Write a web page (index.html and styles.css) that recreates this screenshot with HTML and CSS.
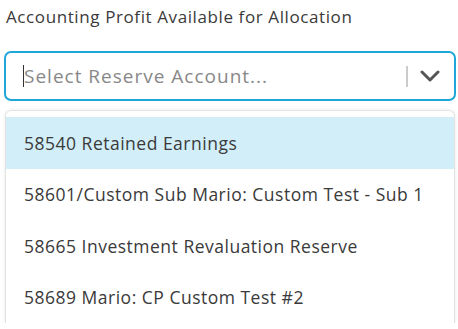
FILE: index.html
```html
<!DOCTYPE html>
<html lang="en">
<head>
  <meta charset="UTF-8">
  <meta name="viewport" content="width=device-width, initial-scale=1">
  <title>Reserve Account</title>
  <link rel="stylesheet" href="styles.css">
</head>
<body>
  <div class="field">
    <label class="field-label">Accounting Profit Available for Allocation</label>
    <div class="select-box">
      <div class="select-value">
        <span class="caret"></span>
        <span class="placeholder">Select Reserve Account...</span>
      </div>
      <span class="separator"></span>
      <span class="chevron">
        <svg width="20" height="12" viewBox="0 0 20 12">
          <path d="M2 2 L10 10 L18 2" fill="none" stroke="#555" stroke-width="3" stroke-linecap="round" stroke-linejoin="round"/>
        </svg>
      </span>
    </div>
    <div class="menu">
      <div class="option active">58540 Retained Earnings</div>
      <div class="option">58601/Custom Sub Mario: Custom Test - Sub 1</div>
      <div class="option">58665 Investment Revaluation Reserve</div>
      <div class="option">58689 Mario: CP Custom Test #2</div>
    </div>
  </div>
</body>
</html>
```

FILE: styles.css
```css
body {
  margin: 0;
  padding: 0 2px 0 4px;
  font-family: "Open Sans", Lato, sans-serif;
  color: #333;
  background: #fff;
}
.field {
  display: flex;
  flex-direction: column;
}
.field-label {
  font-size: 17px;
  line-height: 20px;
  padding: 7px 0 0 2px;
  color: #3a3a3a;
  letter-spacing: 0.6px;
}
.select-box {
  margin-top: 24px;
  height: 46px;
  border: 2px solid #1ea7d8;
  border-radius: 7px;
  display: flex;
  align-items: center;
}
.select-value {
  flex: 1;
  display: flex;
  align-items: center;
  padding-left: 17px;
}
.caret {
  width: 1px;
  height: 22px;
  background: #333;
}
.placeholder {
  font-size: 19px;
  color: #888;
  letter-spacing: 1px;
}
.separator {
  width: 2px;
  height: 21px;
  background: #ccc;
}
.chevron {
  display: flex;
  padding: 0 14px 0 12px;
}
.menu {
  margin: 9px 1px 0 1px;
  padding-top: 6px;
  border: 1px solid #e2e2e2;
  border-bottom: none;
  border-radius: 6px 6px 0 0;
  box-shadow: 0 0 4px rgba(0, 0, 0, 0.08);
}
.option {
  height: 51.5px;
  display: flex;
  align-items: center;
  padding-left: 18px;
  font-size: 17.5px;
  color: #3a3a3a;
  letter-spacing: 0.5px;
}
.option.active {
  background: #d1eef9;
}
```
